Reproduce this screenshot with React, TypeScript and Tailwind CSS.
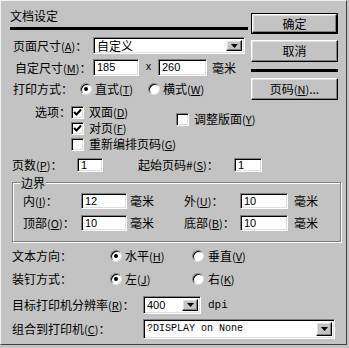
import React from "react";

const sunken =
  "bg-white border border-t-[#808080] border-l-[#808080] border-r-white border-b-white shadow-[inset_1px_1px_0_#000,inset_-1px_-1px_0_#dfdfdf]";
const raised =
  "bg-[#c3c3c3] border border-t-white border-l-white border-r-black border-b-black shadow-[inset_-1px_-1px_0_#808080,inset_1px_1px_0_#dfdfdf]";

function K({ k }: { k: string }) {
  return (
    <span className="text-[11px]">
      (<span className="underline underline-offset-1">{k}</span>)
    </span>
  );
}

function Field({ w, h, v }: { w: string; h: string; v: string }) {
  return (
    <div className={`${sunken} ${w} ${h} flex items-center pl-[3px] font-['Liberation_Sans',sans-serif] text-[11px]`}>
      {v}
    </div>
  );
}

function Arrow() {
  return (
    <div className={`${raised} w-[16px] h-full flex items-center justify-center shrink-0`}>
      <svg width="7" height="4" viewBox="0 0 7 4">
        <polygon points="0,0 7,0 3.5,4" fill="#000" />
      </svg>
    </div>
  );
}

function Combo({ w, h, v, font }: { w: string; h: string; v: string; font: string }) {
  return (
    <div className={`${sunken} ${w} ${h} flex items-stretch p-[2px]`}>
      <div className={`flex-1 flex items-center pl-[1px] ${font}`}>{v}</div>
      <Arrow />
    </div>
  );
}

function Radio({ on }: { on?: boolean }) {
  return (
    <div className="w-[12px] h-[12px] rounded-full bg-white border border-t-[#808080] border-l-[#808080] border-r-[#dfdfdf] border-b-[#dfdfdf] shadow-[inset_1px_1px_0_#000] flex items-center justify-center shrink-0">
      {on && <div className="w-[4px] h-[4px] rounded-full bg-black" />}
    </div>
  );
}

function Check({ on }: { on?: boolean }) {
  return (
    <div className={`${sunken} w-[13px] h-[13px] flex items-center justify-center shrink-0`}>
      {on && (
        <svg width="9" height="9" viewBox="0 0 9 9">
          <polyline points="1,4 3.5,6.5 8,1.5" fill="none" stroke="#000" strokeWidth="2" />
        </svg>
      )}
    </div>
  );
}

function Btn({ children, def, h }: { children: React.ReactNode; def?: boolean; h: string }) {
  if (def)
    return (
      <div className={`border border-black ${h} flex`}>
        <div className={`${raised} flex-1 flex items-center justify-center`}>{children}</div>
      </div>
    );
  return <div className={`${raised} ${h} flex items-center justify-center`}>{children}</div>;
}

export default function App() {
  return (
    <div className="w-[349px] h-[348px] bg-[#c3c3c3] overflow-hidden font-['Noto_Sans_CJK_SC','Liberation_Sans',sans-serif] text-[12px] leading-none text-black">
      <div className="w-[347px] h-[345px] border border-t-[#efefef] border-l-[#efefef] border-r-[#404040] border-b-[#404040]">
        {/* top section */}
        <div className="flex pl-[9px] pt-[8px]">
          <div className="w-[238px] flex flex-col">
            <div className="h-[14px] flex items-center">文档设定</div>
            <div className="mt-[4px] h-[3px] bg-black" />
            <div className="mt-[7px] h-[17px] flex items-center">
              <div className="w-[83px] pl-[3px] whitespace-nowrap">
                页面尺寸<K k="A" />：
              </div>
              <Combo w="w-[152px]" h="h-[17px]" v="自定义" font="text-[12px]" />
            </div>
            <div className="mt-[5px] h-[17px] flex items-center">
              <div className="w-[83px] pl-[5px] whitespace-nowrap">
                自定尺寸<K k="M" />：
              </div>
              <Field w="w-[46px]" h="h-[17px]" v="185" />
              <div className="w-[19px] text-center font-['Liberation_Mono',monospace] text-[10px]">x</div>
              <Field w="w-[49px]" h="h-[17px]" v="260" />
              <div className="ml-[5px]">毫米</div>
            </div>
            <div className="mt-[5px] h-[16px] flex items-center">
              <div className="w-[70px] pl-[3px] whitespace-nowrap">打印方式：</div>
              <Radio on />
              <div className="ml-[3px] w-[53px] whitespace-nowrap">
                直式<K k="T" />
              </div>
              <Radio />
              <div className="ml-[3px] whitespace-nowrap">
                横式<K k="W" />
              </div>
            </div>
            <div className="mt-[7px] flex">
              <div className="w-[67px] pl-[25px] h-[16px] flex items-center whitespace-nowrap">选项：</div>
              <div className="w-[108px] flex flex-col">
                <div className="h-[16px] flex items-center">
                  <Check on />
                  <div className="ml-[5px] whitespace-nowrap">
                    双面<K k="D" />
                  </div>
                </div>
                <div className="h-[16px] flex items-center">
                  <Check on />
                  <div className="ml-[5px] whitespace-nowrap">
                    对页<K k="F" />
                  </div>
                </div>
                <div className="h-[16px] flex items-center">
                  <Check />
                  <div className="ml-[5px] whitespace-nowrap">
                    重新编排页码<K k="G" />
                  </div>
                </div>
              </div>
              <div className="mt-[7px] h-[16px] flex items-center">
                <Check />
                <div className="ml-[5px] whitespace-nowrap">
                  调整版面<K k="Y" />
                </div>
              </div>
            </div>
          </div>
          <div className="ml-[3px] w-[87px] flex flex-col">
            <div className="mt-[4px]">
              <Btn def h="h-[21px]">确定</Btn>
            </div>
            <div className="mt-[6px]">
              <Btn h="h-[22px]">取消</Btn>
            </div>
            <div className="mt-[7px] h-[3px] bg-black" />
            <div className="mt-[6px]">
              <Btn h="h-[22px]">
                页码<K k="N" />...
              </Btn>
            </div>
          </div>
        </div>

        {/* page count row */}
        <div className="mt-[6px] h-[14px] flex items-center pl-[11px]">
          <div className="w-[65px] whitespace-nowrap">
            页数<K k="P" />：
          </div>
          <Field w="w-[26px]" h="h-[14px]" v="1" />
          <div className="w-[131px] pl-[35px] whitespace-nowrap">
            起始页码#<K k="S" />：
          </div>
          <Field w="w-[28px]" h="h-[14px]" v="1" />
        </div>

        {/* margins group */}
        <div className="relative mt-[10px] ml-[11px] w-[329px] h-[60px] border border-[#808080] shadow-[inset_1px_1px_0_#fff,1px_1px_0_#fff]">
          <div className="absolute left-[7px] top-[-7px] px-[1px] bg-[#c3c3c3] h-[13px] flex items-center">边界</div>
          <div className="mt-[10px] h-[16px] flex items-center pl-[10px]">
            <div className="w-[58px] whitespace-nowrap">
              内<K k="I" />：
            </div>
            <Field w="w-[46px]" h="h-[16px]" v="12" />
            <div className="ml-[3px] w-[54px]">毫米</div>
            <div className="w-[56px] whitespace-nowrap">
              外<K k="U" />：
            </div>
            <Field w="w-[48px]" h="h-[16px]" v="10" />
            <div className="ml-[6px]">毫米</div>
          </div>
          <div className="mt-[6px] h-[16px] flex items-center pl-[10px]">
            <div className="w-[58px] whitespace-nowrap">
              顶部<K k="O" />：
            </div>
            <Field w="w-[46px]" h="h-[16px]" v="10" />
            <div className="ml-[3px] w-[54px]">毫米</div>
            <div className="w-[56px] whitespace-nowrap">
              底部<K k="B" />：
            </div>
            <Field w="w-[48px]" h="h-[16px]" v="10" />
            <div className="ml-[6px]">毫米</div>
          </div>
        </div>

        {/* direction */}
        <div className="mt-[6px] h-[16px] flex items-center pl-[11px]">
          <div className="w-[98px] whitespace-nowrap">文本方向：</div>
          <Radio on />
          <div className="ml-[3px] w-[67px] whitespace-nowrap">
            水平<K k="H" />
          </div>
          <Radio />
          <div className="ml-[4px] whitespace-nowrap">
            垂直<K k="V" />
          </div>
        </div>
        <div className="mt-[7px] h-[16px] flex items-center pl-[11px]">
          <div className="w-[98px] whitespace-nowrap">装钉方式：</div>
          <Radio on />
          <div className="ml-[3px] w-[67px] whitespace-nowrap">
            左<K k="J" />
          </div>
          <Radio />
          <div className="ml-[4px] whitespace-nowrap">
            右<K k="K" />
          </div>
        </div>
        <div className="mt-[9px] h-[18px] flex items-center pl-[11px]">
          <div className="w-[131px] whitespace-nowrap">
            目标打印机分辨率<K k="R" />：
          </div>
          <Combo w="w-[58px]" h="h-[18px]" v="400" font="font-['Liberation_Sans',sans-serif] text-[11px]" />
          <div className="ml-[7px] font-['Liberation_Mono',monospace] text-[11px]">dpi</div>
        </div>
        <div className="mt-[5px] h-[20px] flex items-center pl-[11px]">
          <div className="w-[131px] whitespace-nowrap">
            组合到打印机<K k="C" />：
          </div>
          <Combo
            w="w-[192px]"
            h="h-[20px]"
            v="?DISPLAY on None"
            font="font-['Liberation_Mono',monospace] text-[10px]"
          />
        </div>
      </div>
    </div>
  );
}
